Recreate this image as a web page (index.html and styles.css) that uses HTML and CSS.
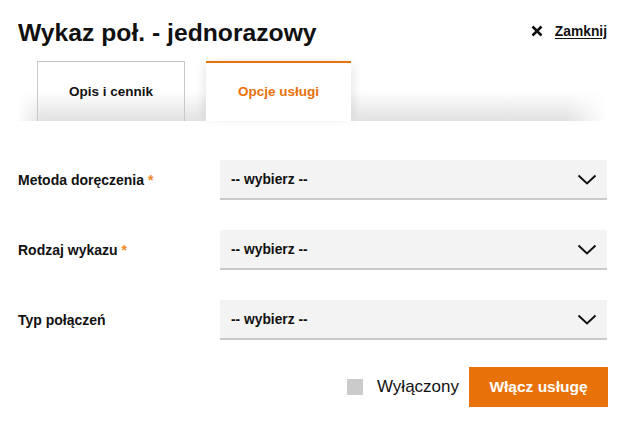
FILE: index.html
```html
<!DOCTYPE html>
<html lang="pl">
<head>
<meta charset="utf-8">
<link rel="stylesheet" href="styles.css">
</head>
<body>
<div class="modal">
  <div class="header">
    <h1 class="title">Wykaz poł. - jednorazowy</h1>
    <a class="close" href="#">
      <svg class="close-icon" width="12" height="12" viewBox="0 0 12 12"><path d="M1.5 1.5 L10.5 10.5 M10.5 1.5 L1.5 10.5" stroke="#111" stroke-width="2.6" fill="none"/></svg>
      <span class="close-text">Zamknij</span>
    </a>
  </div>
  <div class="tabs">
    <div class="tab">Opis i cennik</div>
    <div class="tab tab-active">Opcje usługi</div>
  </div>
  <div class="form">
    <div class="row">
      <div class="label">Metoda doręczenia <span class="req">*</span></div>
      <div class="select"><span>-- wybierz --</span><svg class="chev" width="20" height="12" viewBox="0 0 20 12"><path d="M1.5 1.5 L10 9.5 L18.5 1.5" stroke="#111" stroke-width="2" fill="none"/></svg></div>
    </div>
    <div class="row">
      <div class="label">Rodzaj wykazu <span class="req">*</span></div>
      <div class="select"><span>-- wybierz --</span><svg class="chev" width="20" height="12" viewBox="0 0 20 12"><path d="M1.5 1.5 L10 9.5 L18.5 1.5" stroke="#111" stroke-width="2" fill="none"/></svg></div>
    </div>
    <div class="row">
      <div class="label">Typ połączeń</div>
      <div class="select"><span>-- wybierz --</span><svg class="chev" width="20" height="12" viewBox="0 0 20 12"><path d="M1.5 1.5 L10 9.5 L18.5 1.5" stroke="#111" stroke-width="2" fill="none"/></svg></div>
    </div>
  </div>
  <div class="footer">
    <div class="toggle"><span class="box"></span><span class="toggle-text">Wyłączony</span></div>
    <button class="btn">Włącz usługę</button>
  </div>
</div>
</body>
</html>
```
FILE: styles.css
```css
* { box-sizing: border-box; }
html, body { margin: 0; padding: 0; background: #fff; }
body { font-family: "Liberation Sans", Arial, sans-serif; color: #111; }
.modal { width: 622px; padding: 0 15px 0 17px; }
.header { display: flex; align-items: center; justify-content: space-between; height: 61px; padding: 0 0 0 1px; }
.title { margin: 0; font-size: 24.7px; font-weight: bold; color: #111; position: relative; top: 2px; }
.close { display: flex; align-items: center; gap: 12px; color: #111; text-decoration: none; font-size: 13.8px; font-weight: bold; margin-top: 1px; }
.close-text { text-decoration: underline; text-underline-offset: 2px; }
.tabs { display: flex; gap: 21px; height: 60px; padding-left: 20px;
  background:
    linear-gradient(to right, #fff 0, rgba(255,255,255,0) 24px, rgba(255,255,255,0) calc(100% - 40px), #fff 100%),
    linear-gradient(to bottom, #fff 0, #fff 50%, #e2e2e2 100%); }
.tab { width: 148px; border: 1px solid #c8c8c8; border-bottom: none; display: flex; align-items: center; justify-content: center; font-size: 13.5px; font-weight: bold; color: #111; height: 60px; }
.tab-active { width: 145px; border: none; border-top: 2px solid #e8710a; background: #fff; color: #e8710a; box-shadow: 6px 0 10px -4px rgba(0,0,0,0.10), -6px 0 10px -4px rgba(0,0,0,0.10); padding-bottom: 2px; }
.form { display: flex; flex-direction: column; gap: 30px; padding: 39px 0 0 1px; }
.row { display: flex; align-items: center; }
.label { width: 202px; font-size: 14px; font-weight: bold; color: #111; }
.req { color: #f08a24; }
.select { flex: 1; height: 40px; background: #f3f3f3; border-bottom: 2px solid #c9c9c9; display: flex; align-items: center; justify-content: space-between; padding: 0 10px 0 11px; font-size: 13.8px; font-weight: bold; }
.chev { display: block; margin-top: 1px; }
.footer { display: flex; justify-content: flex-end; align-items: center; margin-top: 27px; }
.toggle { display: flex; align-items: center; gap: 14px; margin-right: 10px; }
.box { width: 16px; height: 16px; background: #cbcbcb; }
.toggle-text { font-size: 17px; color: #111; }
.btn { width: 139px; height: 40px; border: none; background: #e8710a; color: #fff; font-family: "Liberation Sans", Arial, sans-serif; font-size: 15.5px; font-weight: bold; padding: 0; margin-right: -1px; }
```
